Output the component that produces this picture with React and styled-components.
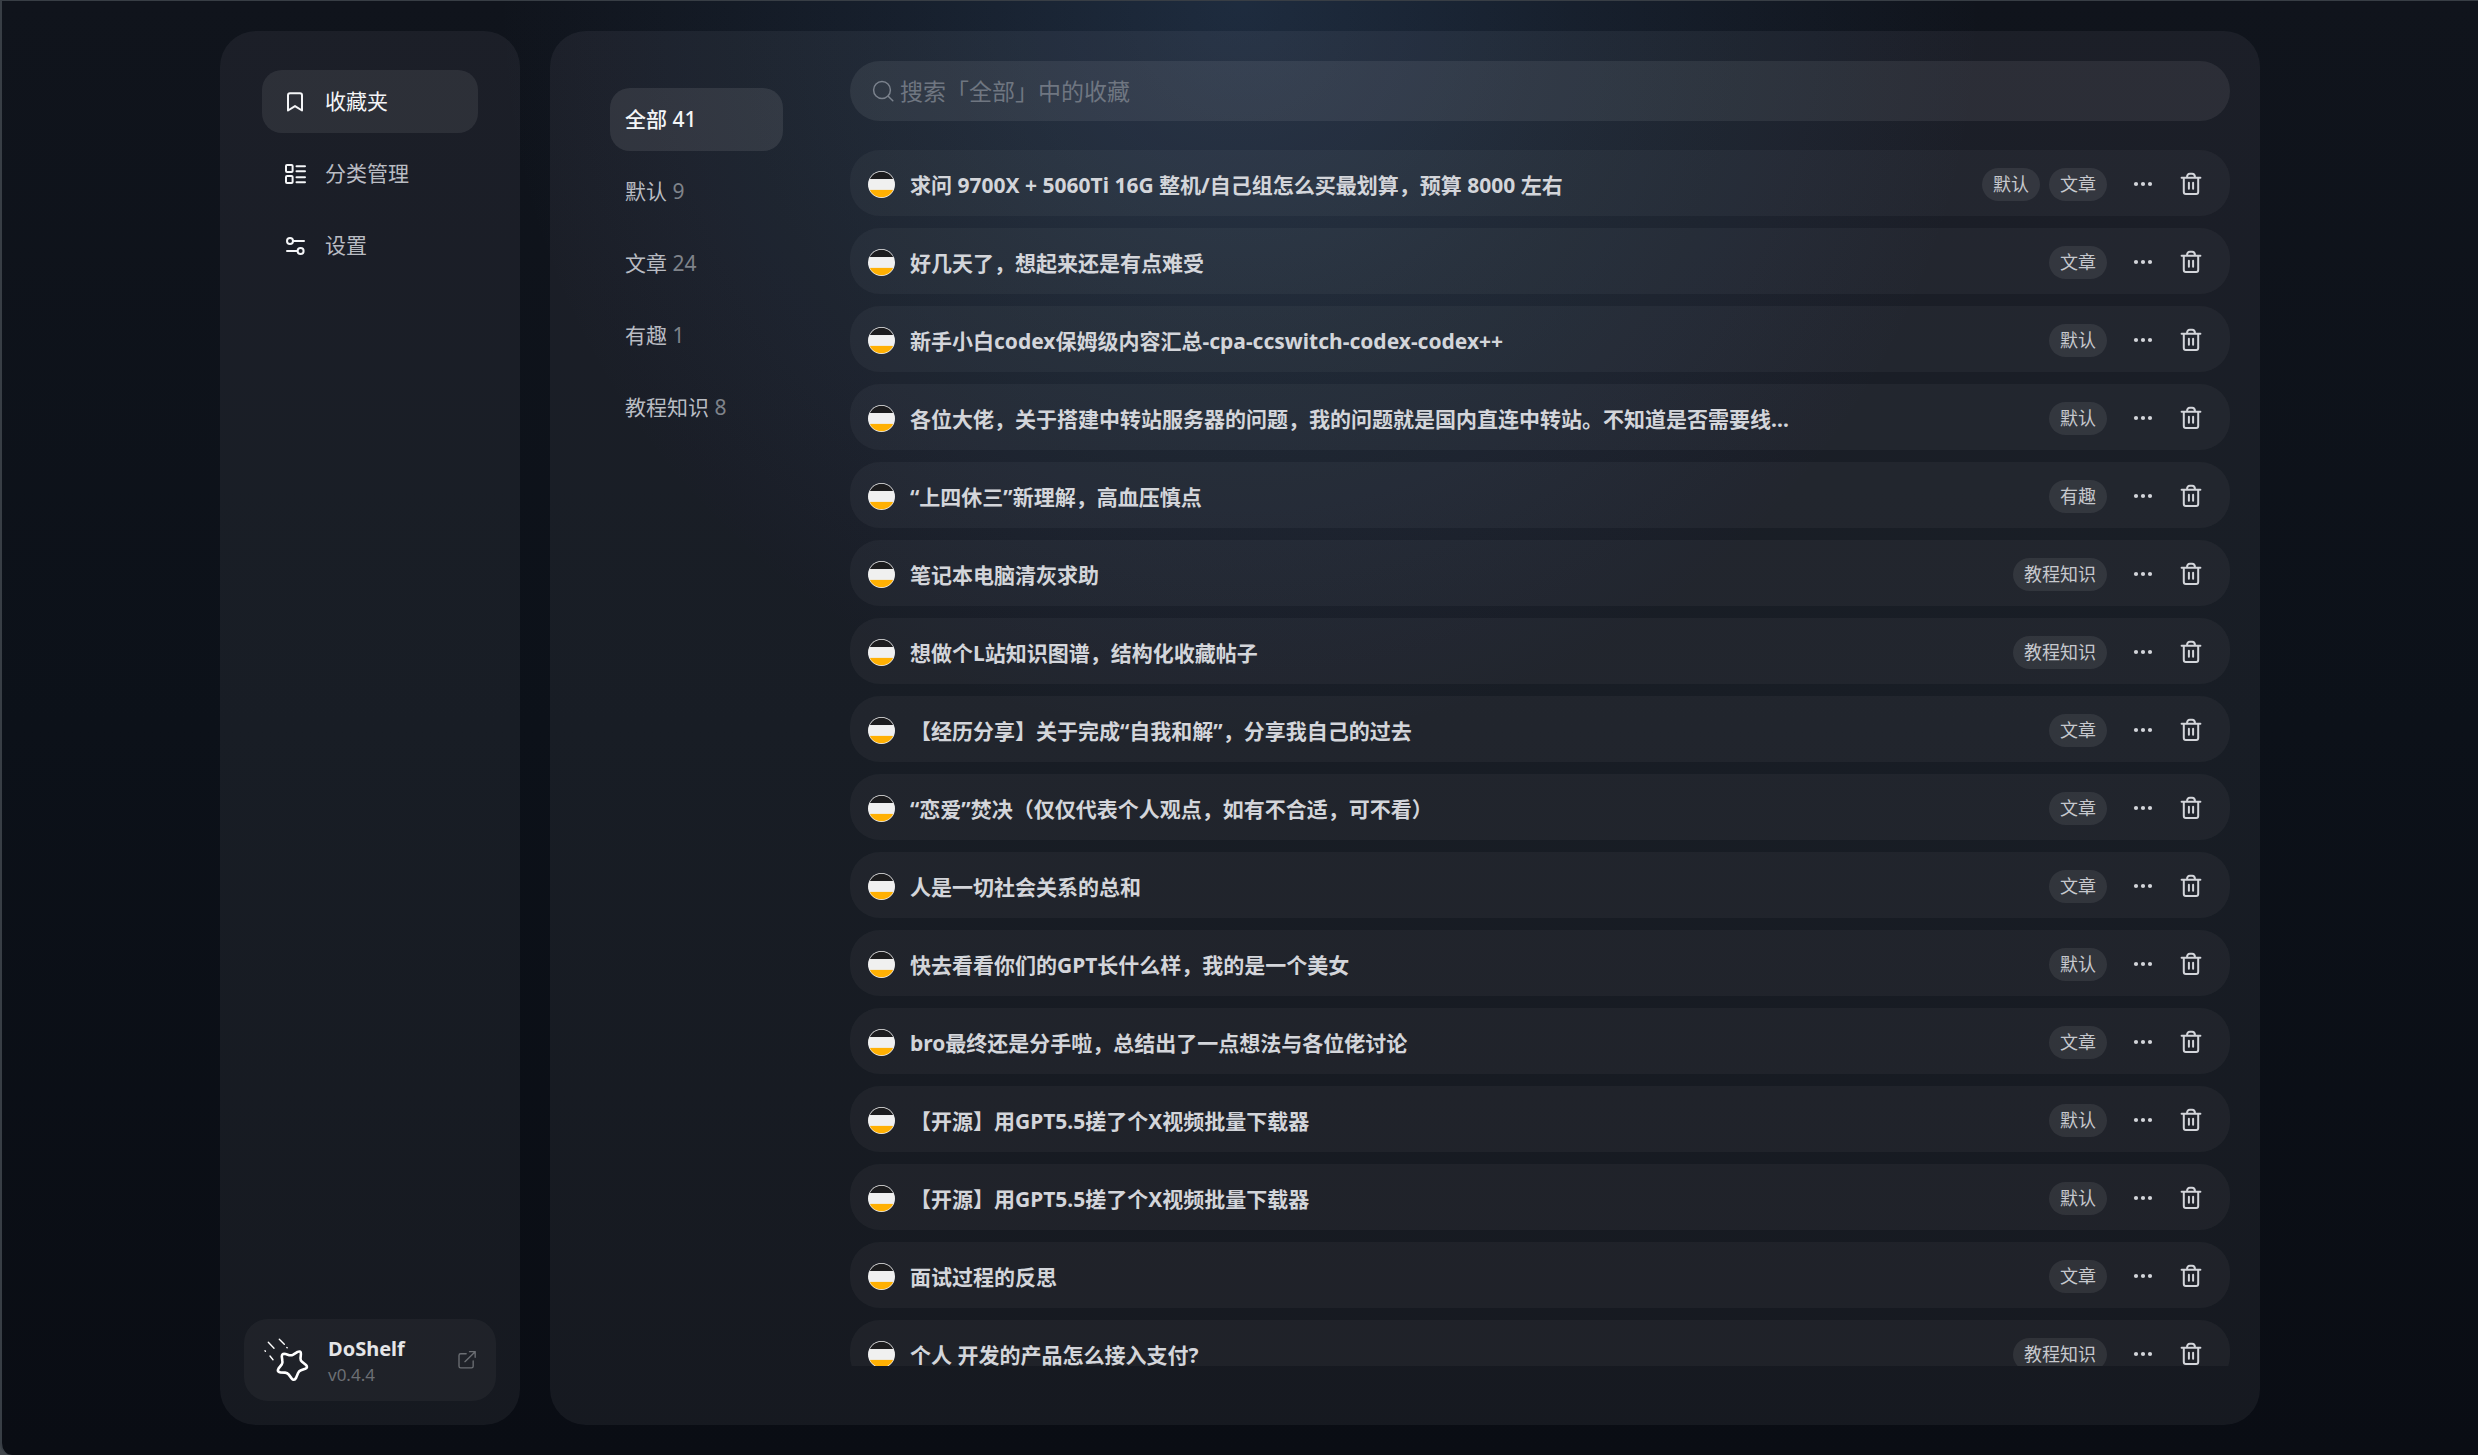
import React, { useState } from "react";
import styled, { createGlobalStyle } from "styled-components";

const categories = [
  { name: "全部", count: 41 },
  { name: "默认", count: 9 },
  { name: "文章", count: 24 },
  { name: "有趣", count: 1 },
  { name: "教程知识", count: 8 },
];

const bookmarks = [
  {
    id: 1,
    title: "求问 9700X + 5060Ti 16G 整机/自己组怎么买最划算，预算 8000 左右",
    tags: ["默认", "文章"],
  },
  { id: 2, title: "好几天了，想起来还是有点难受", tags: ["文章"] },
  {
    id: 3,
    title: "新手小白codex保姆级内容汇总-cpa-ccswitch-codex-codex++",
    tags: ["默认"],
  },
  {
    id: 4,
    title:
      "各位大佬，关于搭建中转站服务器的问题，我的问题就是国内直连中转站。不知道是否需要线…",
    tags: ["默认"],
  },
  { id: 5, title: "“上四休三”新理解，高血压慎点", tags: ["有趣"] },
  { id: 6, title: "笔记本电脑清灰求助", tags: ["教程知识"] },
  { id: 7, title: "想做个L站知识图谱，结构化收藏帖子", tags: ["教程知识"] },
  {
    id: 8,
    title: "【经历分享】关于完成“自我和解”，分享我自己的过去",
    tags: ["文章"],
  },
  {
    id: 9,
    title: "“恋爱”焚决（仅仅代表个人观点，如有不合适，可不看）",
    tags: ["文章"],
  },
  { id: 10, title: "人是一切社会关系的总和", tags: ["文章"] },
  { id: 11, title: "快去看看你们的GPT长什么样，我的是一个美女", tags: ["默认"] },
  {
    id: 12,
    title: "bro最终还是分手啦，总结出了一点想法与各位佬讨论",
    tags: ["文章"],
  },
  { id: 13, title: "【开源】用GPT5.5搓了个X视频批量下载器", tags: ["默认"] },
  { id: 14, title: "【开源】用GPT5.5搓了个X视频批量下载器", tags: ["默认"] },
  { id: 15, title: "面试过程的反思", tags: ["文章"] },
  { id: 16, title: "个人 开发的产品怎么接入支付?", tags: ["教程知识"] },
];

const BookmarkIcon = () => (
  <Icon viewBox="0 0 24 24">
    <path d="M5 20.5V5.2a2 2 0 0 1 2-2h10a2 2 0 0 1 2 2v15.3l-7-4.4z" />
  </Icon>
);

const CategoryIcon = () => (
  <Icon viewBox="0 0 24 24">
    <rect x="3" y="3" width="6.6" height="7" rx="1" />
    <rect x="3" y="14" width="6.6" height="7" rx="1" />
    <path d="M13.5 4.3H22M13.5 9.3H22M13.5 15.2H22M13.5 20.2H22" />
  </Icon>
);

const SettingIcon = () => (
  <Icon viewBox="0 0 24 24">
    <circle cx="7" cy="7" r="3" />
    <path d="M10 7h11M4 17h10" />
    <circle cx="17.6" cy="17" r="3" />
  </Icon>
);

const SearchIcon = () => (
  <Icon viewBox="0 0 24 24" $stroke={1.5}>
    <circle cx="11" cy="11" r="8.4" />
    <path d="M17.2 17.2l4.6 4.6" />
  </Icon>
);

const MoreIcon = () => (
  <Icon viewBox="0 0 24 24" $stroke={0}>
    <g fill="currentColor">
      <circle cx="5" cy="12" r="2.1" />
      <circle cx="12" cy="12" r="2.1" />
      <circle cx="19" cy="12" r="2.1" />
    </g>
  </Icon>
);

const TrashIcon = () => (
  <Icon viewBox="0 0 24 24">
    <path d="M2.6 5.8h18.8M8 5.6c0-2.6 1.2-3.8 2.8-3.8h2.4c1.6 0 2.8 1.2 2.8 3.8" />
    <path d="M4.8 6v14a2 2 0 0 0 2 2h10.4a2 2 0 0 0 2-2V6M9.9 10.8v6M14.1 10.8v6" />
  </Icon>
);

const ExternalIcon = () => (
  <Icon viewBox="0 0 24 24" $size={20} $stroke={1.6}>
    <path d="M11 4.5H4.4a2 2 0 0 0-2 2v13a2 2 0 0 0 2 2h13a2 2 0 0 0 2-2V13M9.5 14L21.8 2M15 2h6.8v6.8" />
  </Icon>
);

const StarLogo = () => (
  <Icon viewBox="0 0 48 48" $size={48} $stroke={2.6}>
    <path d="M22.6 18.1L26.3 19.2Q28.4 19.6 30.2 18.6L34.6 15.9Q38 14.4 37.9 18L37.5 22.4Q37.4 24.4 39 25.8L43 29Q45.3 31.4 42.2 32.8L38 34.2Q36 35 35.1 37L33 42Q31 45.4 28.6 42.4L25.6 38.4Q24.3 36.8 22.2 36.6L17.4 36.4Q13.5 35.8 15.6 32.4L18.6 28.6Q19.8 27 19.4 25L18.8 20.6Q18.8 17 22.6 18.1Z" />
    <g strokeWidth="1.4">
      <path d="M5.3 6.3L11 12.3M16.3 3.3L21.3 8.3M23.8 11.4l.4.4M2 14.8l.4.4M7 20l3 3.7" />
    </g>
  </Icon>
);

const SiteIcon = () => (
  <Favicon viewBox="0 0 120 120" aria-hidden="true">
    <clipPath id="site">
      <circle cx="60" cy="60" r="57" />
    </clipPath>
    <circle cx="60" cy="60" r="60" fill="#f0f0f0" />
    <g clipPath="url(#site)">
      <rect width="120" height="36" fill="#1c1c1e" />
      <rect y="36" width="120" height="48" fill="#f0f0f0" />
      <rect y="84" width="120" height="36" fill="#ffb003" />
    </g>
  </Favicon>
);

const menus = [
  { name: "收藏夹", icon: <BookmarkIcon /> },
  { name: "分类管理", icon: <CategoryIcon /> },
  { name: "设置", icon: <SettingIcon /> },
];

export default function App() {
  const [menu, setMenu] = useState("收藏夹");
  const [category, setCategory] = useState("全部");
  const [search, setSearch] = useState("");

  const list = bookmarks.filter(
    (i) =>
      (category === "全部" || i.tags.includes(category)) &&
      i.title.toLowerCase().includes(search.toLowerCase())
  );

  return (
    <Shell>
      <GlobalStyle />
      <Layout>
        <Sidebar>
          <Menu>
            {menus.map((i) => (
              <MenuItem
                key={i.name}
                $active={menu === i.name}
                onClick={() => setMenu(i.name)}
              >
                {i.icon}
                <MenuName>{i.name}</MenuName>
              </MenuItem>
            ))}
          </Menu>
          <AboutCard href="#about">
            <StarLogo />
            <AboutText>
              <AppName>DoShelf</AppName>
              <Version>v0.4.4</Version>
            </AboutText>
            <ExternalIcon />
          </AboutCard>
        </Sidebar>

        <Main>
          <Categories>
            {categories.map((i) => (
              <CategoryItem
                key={i.name}
                $active={category === i.name}
                onClick={() => setCategory(i.name)}
              >
                {i.name} <Count $active={category === i.name}>{i.count}</Count>
              </CategoryItem>
            ))}
          </Categories>
          <Content>
            <SearchBar>
              <SearchIcon />
              <SearchInput
                aria-label="搜索收藏"
                placeholder={`搜索「${category}」中的收藏`}
                value={search}
                onChange={(e) => setSearch(e.target.value)}
              />
            </SearchBar>
            <List>
              {list.map((i) => (
                <Row key={i.id}>
                  <SiteIcon />
                  <Title href="#">{i.title}</Title>
                  <Tags>
                    {i.tags.map((tag) => (
                      <Tag key={tag}>{tag}</Tag>
                    ))}
                  </Tags>
                  <RowButton aria-label="更多">
                    <MoreIcon />
                  </RowButton>
                  <RowButton aria-label="删除">
                    <TrashIcon />
                  </RowButton>
                </Row>
              ))}
            </List>
          </Content>
        </Main>
      </Layout>
    </Shell>
  );
}

const GlobalStyle = createGlobalStyle`
  * {
    box-sizing: border-box;
  }
  body {
    margin: 0;
    background: #41464b;
    color: #d3d5da;
    font-family: "Noto Sans", "Noto Sans CJK SC", sans-serif;
    font-size: 21px;
  }
  button, input {
    font: inherit;
    color: inherit;
    border: none;
    background: none;
    padding: 0;
  }
  button {
    cursor: pointer;
  }
  a {
    color: inherit;
    text-decoration: none;
  }
`;

const Shell = styled.div`
  height: 100vh;
  border-top: 1px solid #383e45;
  border-left: 2px solid #383e45;
  border-bottom-left-radius: 12px;
  padding: 30px;
  background: radial-gradient(
      circle 30vw at 50% 0,
      rgba(80, 128, 185, 0.22),
      rgba(80, 128, 185, 0.11) 45%,
      rgba(80, 128, 185, 0)
    ),
    linear-gradient(#10141c, #0c1119 50%, #0a0d14);
`;

const Layout = styled.div`
  display: flex;
  gap: 30px;
  height: 100%;
  max-width: 2040px;
  margin: 0 auto;
`;

const Panel = styled.div`
  border-radius: 36px;
  background: rgba(235, 240, 255, 0.055);
`;

const Icon = styled.svg.attrs({ "aria-hidden": true })`
  flex: none;
  width: ${(p) => p.$size || 24}px;
  height: ${(p) => p.$size || 24}px;
  fill: none;
  stroke: ${(p) => (p.$stroke === 0 ? "none" : "currentColor")};
  stroke-width: ${(p) => p.$stroke || 2};
  stroke-linecap: round;
  stroke-linejoin: round;
`;

const Sidebar = styled(Panel).attrs({ as: "aside" })`
  flex: none;
  display: flex;
  flex-direction: column;
  justify-content: space-between;
  width: 300px;
  padding: 39px 24px 24px;
`;

const Menu = styled.nav`
  display: flex;
  flex-direction: column;
  gap: 9px;
  padding: 0 18px;
`;

const MenuItem = styled.button`
  display: flex;
  align-items: center;
  gap: 18px;
  height: 63px;
  padding: 0 21px;
  border-radius: 20px;
  background: ${(p) => (p.$active ? "rgba(255, 255, 255, 0.08)" : "none")};
  color: ${(p) => (p.$active ? "#f4f5f7" : "#b9bcc3")};

  svg {
    color: #f4f5f7;
  }
`;

const MenuName = styled.span`
  padding-bottom: 3px;
`;

const AboutCard = styled.a`
  display: flex;
  align-items: center;
  gap: 17px;
  height: 82px;
  padding: 0 19px;
  border-radius: 24px;
  background: rgba(255, 255, 255, 0.04);
  color: #ffffff;

  svg:last-child {
    color: #6c6f74;
  }
`;

const AboutText = styled.div`
  flex: 1;
  display: flex;
  flex-direction: column;
`;

const AppName = styled.strong`
  font-size: 20px;
  line-height: 29px;
  color: #e4e5e7;
`;

const Version = styled.span`
  font-size: 17px;
  line-height: 24px;
  color: #6c6f74;
`;

const Main = styled(Panel).attrs({ as: "main" })`
  flex: 1;
  min-width: 0;
  display: flex;
  gap: 67px;
  padding: 30px 30px 59px 60px;
`;

const Categories = styled.nav`
  flex: none;
  display: flex;
  flex-direction: column;
  gap: 9px;
  width: 173px;
  padding-top: 27px;
`;

const CategoryItem = styled.button`
  height: 63px;
  padding: 0 15px 3px;
  border-radius: 20px;
  text-align: left;
  background: ${(p) => (p.$active ? "rgba(255, 255, 255, 0.09)" : "none")};
  color: ${(p) => (p.$active ? "#f4f5f7" : "#b9bcc3")};
  font-weight: ${(p) => (p.$active ? 500 : 400)};
`;

const Count = styled.span`
  color: ${(p) => (p.$active ? "#f4f5f7" : "#7f838a")};
`;

const Content = styled.section`
  flex: 1;
  min-width: 0;
  display: flex;
  flex-direction: column;
  gap: 29px;
`;

const SearchBar = styled.label`
  flex: none;
  display: flex;
  align-items: center;
  gap: 5px;
  height: 60px;
  padding: 0 21px;
  border-radius: 30px;
  background: rgba(255, 255, 255, 0.07);
  color: #7b828d;
`;

const SearchInput = styled.input`
  flex: 1;
  min-width: 0;
  outline: none;
  font-size: 23px;
  color: #d3d5da;

  &::placeholder {
    color: #6f7681;
  }
`;

const List = styled.ul`
  flex: 1;
  min-height: 0;
  display: flex;
  flex-direction: column;
  gap: 12px;
  margin: 0;
  padding: 0;
  list-style: none;
  overflow: hidden;
`;

const Row = styled.li`
  flex: none;
  display: flex;
  align-items: center;
  height: 66px;
  padding: 2px 15px 0 18px;
  border-radius: 30px;
  background: rgba(255, 255, 255, 0.04);
`;

const Favicon = styled.svg`
  flex: none;
  width: 27px;
  height: 27px;
  margin-right: 15px;
`;

const Title = styled.a`
  flex: 1;
  min-width: 0;
  font-weight: 700;
  white-space: nowrap;
  overflow: hidden;
  text-overflow: ellipsis;
`;

const Tags = styled.div`
  display: flex;
  gap: 9px;
  margin: 0 12px;
`;

const Tag = styled.span`
  padding: 0 11px;
  border-radius: 17px;
  background: rgba(255, 255, 255, 0.08);
  color: #c6c8cd;
  font-size: 18px;
  line-height: 33px;
`;

const RowButton = styled.button`
  display: grid;
  place-items: center;
  width: 48px;
  height: 48px;
`;
